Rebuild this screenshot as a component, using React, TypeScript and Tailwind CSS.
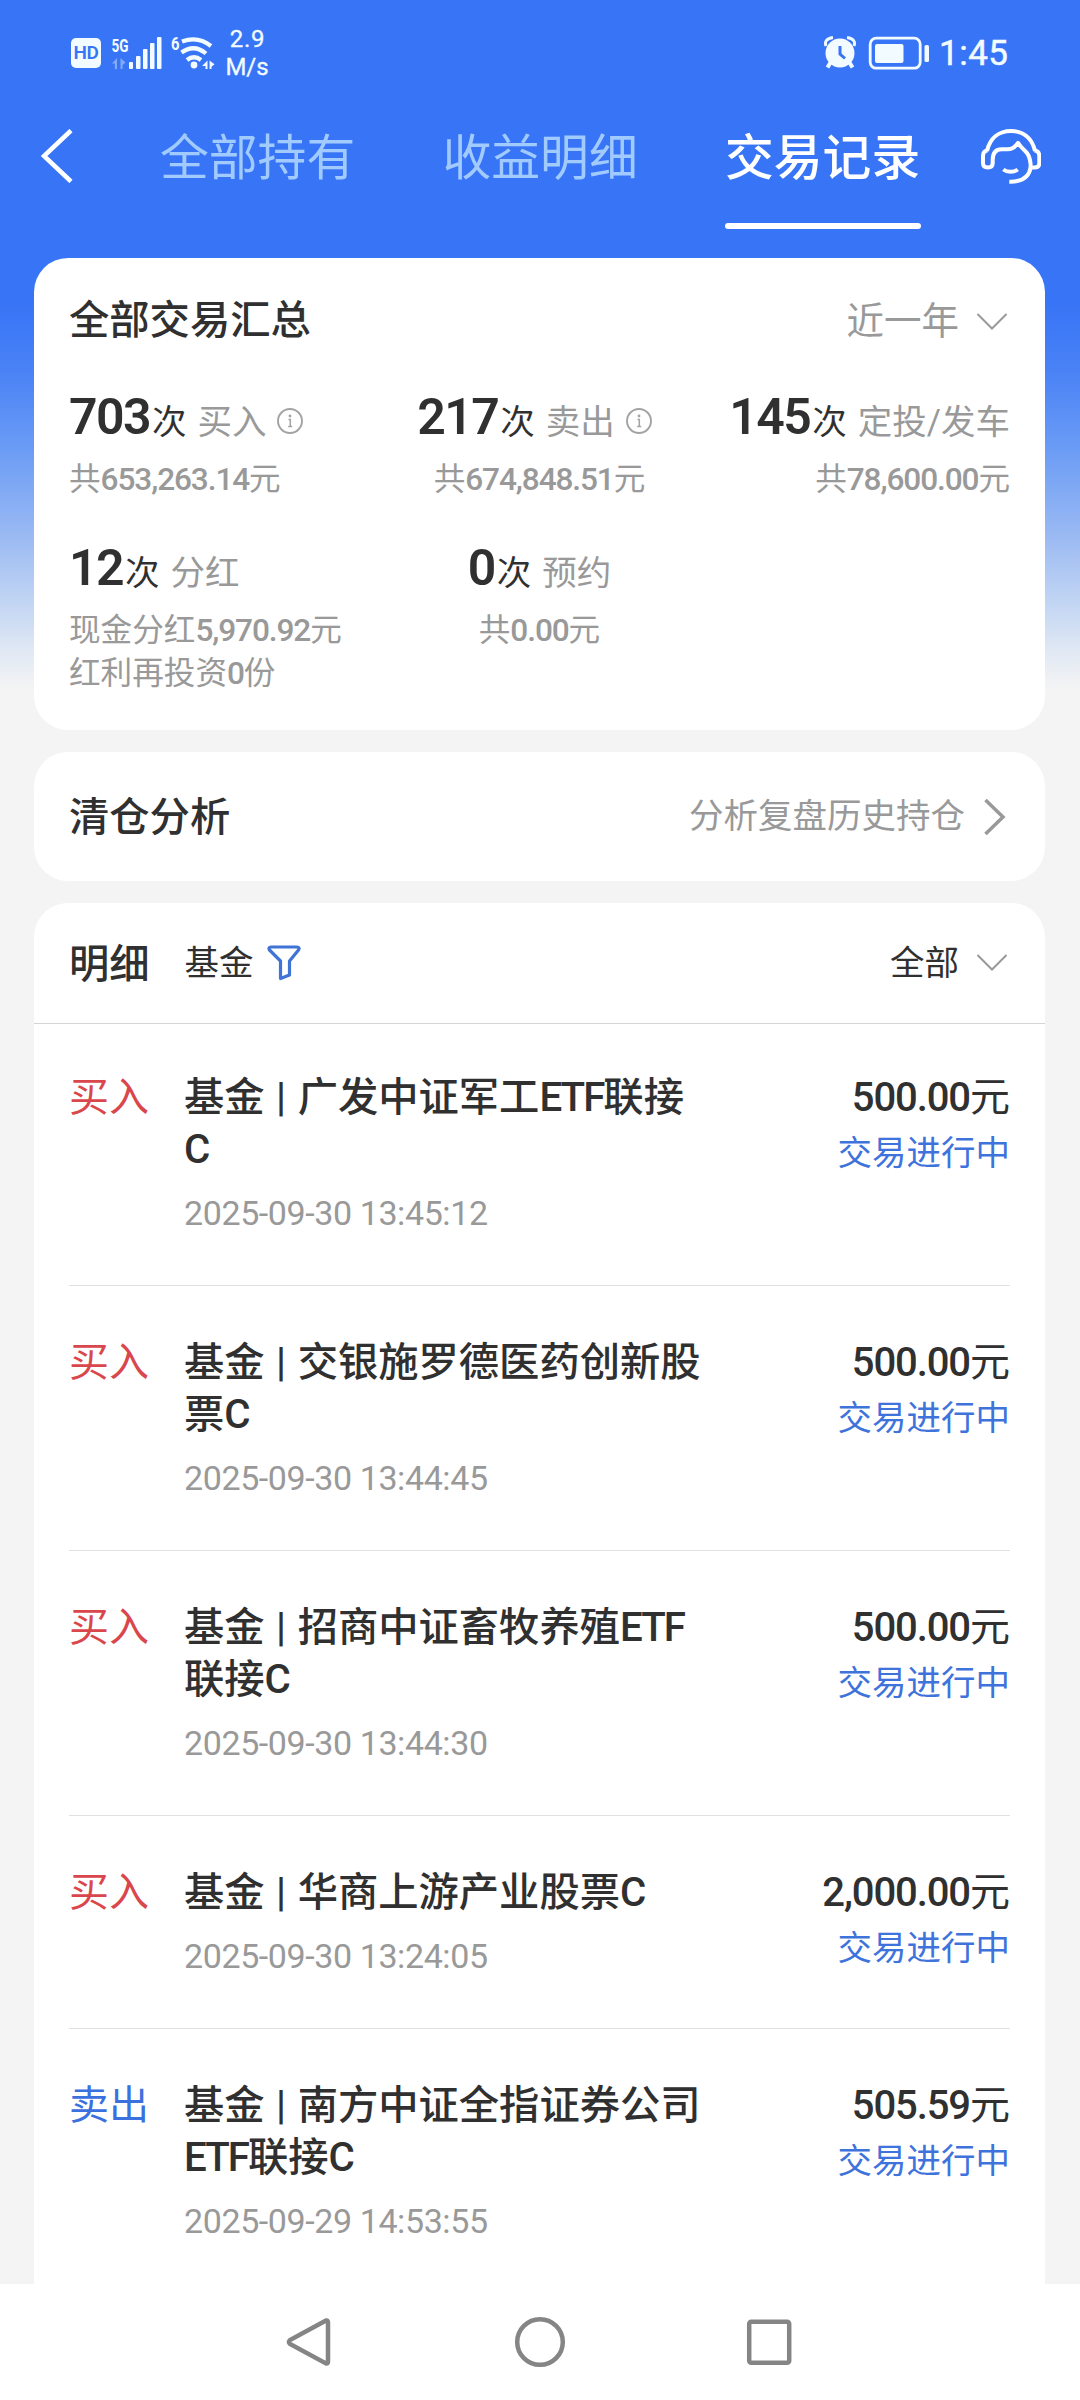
import { Fragment } from "react";

type Stat = {
  count: string;
  label: string;
  info?: boolean;
  lines: string[];
};

type Trade = {
  side: "buy" | "sell";
  name: string;
  time: string;
  amount: string;
};

const tabs = ["全部持有", "收益明细", "交易记录"];

const stats: Stat[] = [
  { count: "703", label: "买入", info: true, lines: ["共653,263.14元"] },
  { count: "217", label: "卖出", info: true, lines: ["共674,848.51元"] },
  { count: "145", label: "定投/发车", lines: ["共78,600.00元"] },
  { count: "12", label: "分红", lines: ["现金分红5,970.92元", "红利再投资0份"] },
  { count: "0", label: "预约", lines: ["共0.00元"] },
];

const trades: Trade[] = [
  { side: "buy", name: "广发中证军工ETF联接C", time: "2025-09-30 13:45:12", amount: "500.00" },
  { side: "buy", name: "交银施罗德医药创新股票C", time: "2025-09-30 13:44:45", amount: "500.00" },
  { side: "buy", name: "招商中证畜牧养殖ETF联接C", time: "2025-09-30 13:44:30", amount: "500.00" },
  { side: "buy", name: "华商上游产业股票C", time: "2025-09-30 13:24:05", amount: "2,000.00" },
  { side: "sell", name: "南方中证全指证券公司ETF联接C", time: "2025-09-29 14:53:55", amount: "505.59" },
];

const columnAlign = ["items-start", "items-center", "items-end"];

// digits and latin letters are set a little heavier and tighter than the Chinese text around them
function Mixed({ text }: { text: string }) {
  return (
    <>
      {text.split(/([\d.,]+|[A-Z]+)/).map((part, i) =>
        i % 2 ? (
          <span
            key={i}
            className={/[A-Z]/.test(part) ? "font-medium tracking-[-2px]" : "font-medium tracking-[-1.1px]"}
          >
            {part}
          </span>
        ) : (
          <Fragment key={i}>{part}</Fragment>
        )
      )}
    </>
  );
}

function ChevronDown() {
  return (
    <svg className="h-[20px] w-[32px]" viewBox="0 0 32 20" fill="none" stroke="#999" strokeWidth="2">
      <path d="M1.5 2 16 16.5 30.5 2" />
    </svg>
  );
}

function InfoIcon() {
  return (
    <svg className="mb-[-1px] ml-[11px] h-[26px] w-[26px]" viewBox="0 0 26 26" fill="none" stroke="#a3a3a3">
      <circle cx="13" cy="13" r="12" strokeWidth="1.9" />
      <path d="M11.5 11.5H13.300V18.500M11.200 18.500h4" strokeWidth="1.5" />
      <circle cx="13" cy="8" r="1.4" fill="#a3a3a3" stroke="none" />
    </svg>
  );
}

function StatusBar() {
  return (
    <div className="flex h-[106px] items-center pl-[71px] pr-[72px] text-[#f2fbff]">
      <div className="flex h-[30px] w-[30px] items-center justify-center rounded-[5px] bg-[#f2fbff] text-[19px] font-semibold leading-[30px] tracking-[-0.3px] text-[#3875f6]">
        HD
      </div>
      <svg className="ml-[10px] h-[34px] w-[104px] overflow-visible" viewBox="111 35 104 34" fill="currentColor">
        <text x="111.500" y="51" fontSize="19" fontWeight="700" textLength="17" lengthAdjust="spacingAndGlyphs">
          5G
        </text>
        <g opacity="0.4">
          <path d="M117 57v11h-2.200v-5.500h-2.800zM120.500 57v11h2v-4l3-2.500z" />
        </g>
        <rect x="129" y="61" width="4" height="7" rx="1" />
        <rect x="136" y="55" width="4.500" height="13" rx="1" />
        <rect x="143" y="48" width="4.500" height="20" rx="1" />
        <rect x="150" y="42" width="4.500" height="26" rx="1" />
        <rect x="157" y="36" width="4.500" height="32" rx="1" />
        <text x="171" y="49" fontSize="18" fontWeight="700" textLength="8.500" lengthAdjust="spacingAndGlyphs">
          6
        </text>
        <g fill="none" stroke="currentColor" strokeWidth="4.200">
          <path d="M182 40.500Q198 34.500 211 45" />
          <path d="M181.500 51.500Q194 42.500 206 52.500" />
          <path d="M187 59Q194 53.500 201 59" />
        </g>
        <circle cx="194" cy="64" r="3.400" />
        <path d="M207.500 59.500v8.500h-2v-3h-3.500zM209.500 59.500l.100 8.500h1.900v-2.200l3-2.600z" />
      </svg>
      <div className="ml-[10px] w-[44px] text-center text-[24px] leading-[28px] [-webkit-text-stroke:0.3px]">
        <div className="pl-[1px] tracking-[0.8px]">2.9</div>
        <div>M/s</div>
      </div>
      <svg className="ml-auto h-[34px] w-[106px]" viewBox="824 35 106 34" fill="currentColor">
        <circle cx="840" cy="52" r="14.500" />
        <path d="M826 45q-2.500-7 7-8.500M854 45q2.500-7-7-8.500" fill="none" stroke="currentColor" strokeWidth="3" />
        <path d="M830.500 61.500l-3 5M849.500 61.500l3 5" stroke="currentColor" strokeWidth="4" />
        <path d="M840 45v8l5 4.500" fill="none" stroke="#3875f6" strokeWidth="3" />
        <rect x="870.200" y="37.200" width="50" height="30" rx="6" fill="none" stroke="currentColor" strokeWidth="2.800" />
        <rect x="875" y="43" width="28.500" height="19" rx="2" />
        <rect x="924.500" y="44" width="4.500" height="17" rx="1.500" />
      </svg>
      <div className="ml-[9px] w-[69px] text-[35px] leading-none tracking-[0.500px] [-webkit-text-stroke:0.5px]">1:45</div>
    </div>
  );
}

function Header() {
  return (
    <div className="flex h-[152px] items-start pl-[41px]">
      <svg className="mt-[23px] h-[54px] w-[32px]" viewBox="0 0 32 54" fill="none" stroke="#fff" strokeWidth="4.500">
        <path d="M30 1.500 3 27 30 52.500" />
      </svg>
      <div className="ml-[87px] flex gap-[86.500px]">
        {tabs.map((tab, i) => (
          <div
            key={tab}
            className={`w-[196px] whitespace-nowrap text-[48.800px] ${i === 2 ? "font-medium text-white" : "text-[#a1caff]"}`}
          >
            <div className="leading-[106px]">{tab}</div>
            {i === 2 && <div className="mt-[11px] h-[6px] rounded-full bg-white" />}
          </div>
        ))}
      </div>
      <svg
        className="ml-[60px] mt-[22px] h-[58px] w-[60px] shrink-0"
        viewBox="0 0 60 58"
        fill="none"
        stroke="#fff"
        strokeWidth="4"
        strokeLinejoin="round"
      >
        <path d="M6 23C9 10 18 3 30 3s21 7 24 20" />
        <path d="M6.500 22.500C3 23 2 25 2 28v7c0 3 1.500 4.500 4.800 4.500s4.900-1.500 4.900-4.500v-3c0-7 3.300-10.700 9-10.700h6c5 0 8-3 10.300-6.500 3 5 6 6.500 9 10.200 2.500 3.500 3.700 8 3.700 14.500h4c3.300 0 4.600-1.500 4.600-4.500v-7c0-3-1-5-4.800-5.500" />
        <path d="M49.700 39c-1.500 10-9 15-21.400 14.700" />
        <path d="M22.300 41.500c4 3 10.500 3 14.400 0" />
      </svg>
    </div>
  );
}

function Summary() {
  return (
    <section className="h-[472px] shrink-0 rounded-[34px] bg-white px-[35px]">
      <div className="flex h-[124px] items-center justify-between pt-[3px]">
        <h2 className="text-[40.300px] font-medium leading-none">全部交易汇总</h2>
        <div className="flex items-center gap-[17px] pr-[2px] text-[37.500px] leading-none text-[#999]">
          近一年
          <ChevronDown />
        </div>
      </div>
      <div className="grid grid-cols-3 gap-y-[32px]">
        {stats.map((stat, i) => (
          <div key={stat.label} className={`flex flex-col whitespace-nowrap ${columnAlign[i % 3]}`}>
            <div className={`flex h-[70px] items-baseline leading-[70px] ${i === 1 ? "pr-[10px]" : ""}`}>
              <span className="text-[50px] font-semibold tracking-[-1.600px]">{stat.count}</span>
              <span className="ml-[2px] text-[34.500px] leading-none">次</span>
              <span className="ml-[11px] text-[34.500px] leading-none text-[#999]">{stat.label}</span>
              {stat.info && <InfoIcon />}
            </div>
            <div className="mt-[6px] text-[31.600px] leading-[43px] text-[#999]">
              {stat.lines.map((line) => (
                <div key={line}>
                  <Mixed text={line} />
                </div>
              ))}
            </div>
          </div>
        ))}
      </div>
    </section>
  );
}

function TradeRow({ trade, first, last }: { trade: Trade; first: boolean; last: boolean }) {
  return (
    <li
      className={`flex items-start ${first ? "pb-[48px] pt-[48px]" : "pb-[48px] pt-[51px]"} ${
        last ? "" : "border-b border-[#e0e0e0]"
      }`}
    >
      <div
        className={`w-[115px] shrink-0 text-[40px] leading-[52px] ${
          trade.side === "buy" ? "text-[#d9474d]" : "text-[#3b70df]"
        }`}
      >
        {trade.side === "buy" ? "买入" : "卖出"}
      </div>
      <div className="w-[522px] shrink-0">
        <div className="text-[40.300px] font-medium leading-[52px] [word-spacing:1.5px]">
          基金 | <Mixed text={trade.name} />
        </div>
        <div className="mt-[13px] text-[34px] leading-[48px] tracking-[-0.400px] text-[#999]">{trade.time}</div>
      </div>
      <div className="ml-auto text-right">
        <div className="text-[40px] leading-[52px]">
          <Mixed text={`${trade.amount}元`} />
        </div>
        <div className="mt-[5px] text-[34.500px] leading-[48px] text-[#3f73dc]">交易进行中</div>
      </div>
    </li>
  );
}

export default function App() {
  return (
    <div
      lang="zh-CN"
      className="flex h-[2400px] w-[1080px] flex-col overflow-hidden bg-[#f4f4f4] bg-[linear-gradient(180deg,#3875f6_0px,#3875f6_305px,#4a82f6_370px,#6b9cf5_450px,#9dbbf3_540px,#c6d8f3_610px,#e3eaf4_655px,#f4f4f4_690px)] font-['Roboto','Noto_Sans_CJK_SC',sans-serif] text-[#303030]"
    >
      <StatusBar />
      <Header />
      <main className="flex min-h-0 flex-1 flex-col gap-[22px] overflow-hidden pl-[34px] pr-[35px]">
        <Summary />
        <section className="flex h-[129px] shrink-0 items-center justify-between rounded-[34px] bg-white px-[35px]">
          <h2 className="pt-[4px] text-[40.300px] font-medium leading-none">清仓分析</h2>
          <div className="flex items-center gap-[18px] pr-[4px] text-[34.500px] leading-none text-[#999]">
            分析复盘历史持仓
            <svg className="h-[36px] w-[23px]" viewBox="0 0 23 36" fill="none" stroke="#999" strokeWidth="3.500">
              <path d="M2.500 1 20 18 2.500 35" />
            </svg>
          </div>
        </section>
        <section className="flex-1 rounded-t-[34px] bg-white">
          <div className="flex h-[121px] items-center border-b border-[#d4d4d4] px-[35px]">
            <h2 className="pt-[5px] text-[40.300px] font-medium leading-none">明细</h2>
            <span className="ml-[35px] text-[34.500px] leading-none">基金</span>
            <svg
              className="ml-[13px] h-[36px] w-[34px]"
              viewBox="0 0 34 36"
              fill="none"
              stroke="#3f73d6"
              strokeWidth="3.200"
              strokeLinejoin="round"
            >
              <path d="M4 2h26c2 0 2.500 1.500 1.500 3L22.500 16v14l-9 3.500V16L2.500 5C1.500 3.500 2 2 4 2z" />
            </svg>
            <div className="ml-auto flex items-center gap-[17px] pr-[2px] text-[34.500px] leading-none">
              全部
              <ChevronDown />
            </div>
          </div>
          <ul className="px-[35px]">
            {trades.map((trade, i) => (
              <TradeRow key={trade.time} trade={trade} first={i === 0} last={i === trades.length - 1} />
            ))}
          </ul>
        </section>
      </main>
      <nav className="flex h-[116px] shrink-0 items-center bg-white pl-[286px]">
        <svg className="h-[54px] w-[506px]" viewBox="286 2315 506 54" fill="none" stroke="#858585" strokeWidth="4.500">
          <path d="M326 2320.500 290 2340q-2 2 0 4l36 19.500q2 .500 2-2v-39q0-2.500-2-2z" />
          <circle cx="540" cy="2342" r="22.800" />
          <rect x="749.200" y="2321.700" width="40" height="41" rx="2" />
        </svg>
      </nav>
    </div>
  );
}
